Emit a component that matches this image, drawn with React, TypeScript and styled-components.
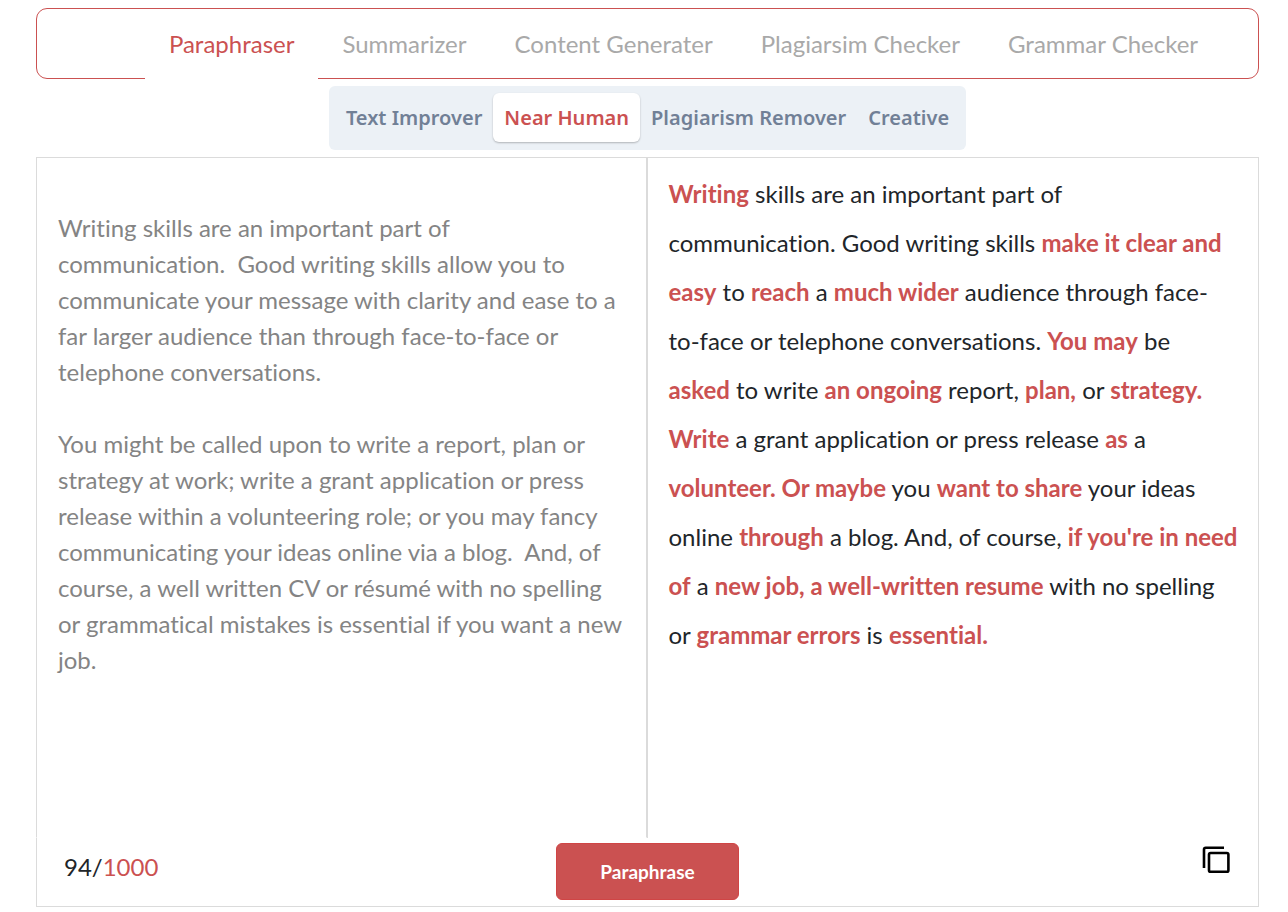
import { useState } from "react";
import styled, { createGlobalStyle } from "styled-components";

const red = "#cb5151";
const line = "#dbdbdb";

const GlobalStyle = createGlobalStyle`
  *, *::before, *::after { box-sizing: border-box; }
  body {
    margin: 0;
    background: #fff;
    color: #212529;
    font-family: Lato, "Liberation Sans", sans-serif;
    font-size: 24px;
    line-height: 36px;
    font-variant-ligatures: none;
  }
  button, textarea { font: inherit; font-variant-ligatures: none; }
`;

const Page = styled.main`
  display: flex;
  flex-direction: column;
  gap: 7px;
  padding: 8px 29px 5px 36px;
`;

const ToolNav = styled.nav`
  display: flex;
  justify-content: center;
  height: 71px;
  padding-left: 72px;
  border: 1px solid ${red};
  border-radius: 11px;
`;

const ToolLink = styled.a<{ $active: boolean }>`
  display: flex;
  align-items: center;
  height: 70px;
  padding: 0 24px;
  white-space: nowrap;
  text-decoration: none;
  color: ${(p) => (p.$active ? red : "#a9a9a9")};
  background: ${(p) => (p.$active ? "#fff" : "transparent")};
`;

const ModeBar = styled.div`
  display: flex;
  align-self: center;
  height: 64px;
  padding: 7px 6px;
  border-radius: 6px;
  background: #ecf1f6;
`;

const ModeButton = styled.button<{ $active: boolean }>`
  height: 49px;
  padding: 0 11px;
  border: 0;
  border-radius: 6px;
  font-family: "Noto Sans", "Open Sans", sans-serif;
  font-size: 20px;
  font-weight: 600;
  white-space: nowrap;
  cursor: pointer;
  color: ${(p) => (p.$active ? red : "#718096")};
  background: ${(p) => (p.$active ? "#fff" : "transparent")};
  box-shadow: ${(p) => (p.$active ? "0 1px 2px rgba(0, 0, 0, 0.25)" : "none")};
`;

const Workspace = styled.section`
  display: flex;
  flex-direction: column;
`;

const Panels = styled.div`
  display: grid;
  grid-template-columns: calc(50% - 1px) 1fr;
`;

const SourceText = styled.textarea`
  min-height: 681px;
  padding: 52px 20px 0 21px;
  border: 1px solid ${line};
  border-bottom-color: #fff;
  outline: 0;
  resize: none;
  overflow: hidden;
  background: #fff;
  color: #848484;
`;

const Result = styled.div`
  padding: 11px 20px 0 21px;
  border: 1px solid ${line};
  border-bottom: 0;
`;

const ResultText = styled.p`
  margin: 0;
  line-height: 49px;
`;

const Changed = styled.b`
  font-weight: 700;
  color: ${red};
`;

const Footer = styled.footer`
  display: grid;
  grid-template-columns: 1fr auto 1fr;
  align-items: center;
  height: 69px;
  padding: 0 27px 1px;
  border: 1px solid ${line};
  border-top: 0;
`;

const Counter = styled.span`
  padding-bottom: 10px;
`;

const Limit = styled.span`
  color: ${red};
`;

const SubmitButton = styled.button`
  width: 183px;
  height: 57px;
  border: 1px solid #d04545;
  border-radius: 6px;
  font-size: 19px;
  font-weight: 700;
  color: #fff;
  background: ${red};
  cursor: pointer;
`;

const CopyButton = styled.button`
  display: flex;
  justify-self: end;
  padding: 0 1px 23px 0;
  border: 0;
  background: none;
  color: #000;
  cursor: pointer;
`;

const tools = ["Paraphraser", "Summarizer", "Content Generater", "Plagiarsim Checker", "Grammar Checker"];
const modes = ["Text Improver", "Near Human", "Plagiarism Remover", "Creative"];

const sourceText = `Writing skills are an important part of communication.\u00a0 Good writing skills allow you to communicate your message with clarity and ease to a far larger audience than through face-to-face or telephone conversations.

You might be called upon to write a report, plan or strategy at work; write a grant application or press release within a volunteering role; or you may fancy communicating your ideas online via a blog.\u00a0 And, of course, a well written CV or résumé with no spelling or grammatical mistakes is essential if you want a new job.`;

export default function App() {
  const [mode, setMode] = useState("Near Human");
  const [text, setText] = useState(sourceText);
  const words = text.split(/\s/).length;

  return (
    <>
      <GlobalStyle />
      <Page>
        <ToolNav aria-label="Tools">
          {tools.map((tool, i) => (
            <ToolLink key={tool} href="#" $active={i === 0} aria-current={i === 0 ? "page" : undefined}>
              {tool}
            </ToolLink>
          ))}
        </ToolNav>
        <ModeBar role="group" aria-label="Mode">
          {modes.map((name) => (
            <ModeButton
              key={name}
              type="button"
              $active={name === mode}
              aria-pressed={name === mode}
              onClick={() => setMode(name)}
            >
              {name}
            </ModeButton>
          ))}
        </ModeBar>
        <Workspace>
          <Panels>
            <SourceText
              aria-label="Original text"
              spellCheck={false}
              value={text}
              onChange={(e) => setText(e.target.value)}
            />
            <Result>
              <ResultText>
                <Changed>Writing</Changed> skills are an important part of
                <br />
                communication. Good writing skills <Changed>make it clear and easy</Changed> to{" "}
                <Changed>reach</Changed> a <Changed>much wider</Changed> audience through face-to-face or
                telephone conversations. <Changed>You may</Changed> be <br />
                <Changed>asked</Changed> to write <Changed>an ongoing</Changed> report,{" "}
                <Changed>plan,</Changed> or <Changed>strategy. Write</Changed> a grant application or press
                release <Changed>as</Changed> a <br />
                <Changed>volunteer. Or maybe</Changed> you <Changed>want to share</Changed> your ideas online{" "}
                <Changed>through</Changed> a blog. And, of course, <Changed>if you're in need of</Changed> a{" "}
                <Changed>new job, a well-written resume</Changed> with no spelling or{" "}
                <Changed>grammar errors</Changed> is <Changed>essential.</Changed>
              </ResultText>
            </Result>
          </Panels>
          <Footer>
            <Counter>
              {words}/<Limit>1000</Limit>
            </Counter>
            <SubmitButton type="button">Paraphrase</SubmitButton>
            <CopyButton type="button" aria-label="Copy result">
              <svg width="28" height="28" viewBox="0 0 28 28" fill="none" stroke="currentColor" strokeWidth="2.6">
                <path d="M2 22V3.6q0-1.8 1.8-1.8H22" />
                <rect x="7" y="7" width="19.4" height="18.8" rx="1.6" />
              </svg>
            </CopyButton>
          </Footer>
        </Workspace>
      </Page>
    </>
  );
}
